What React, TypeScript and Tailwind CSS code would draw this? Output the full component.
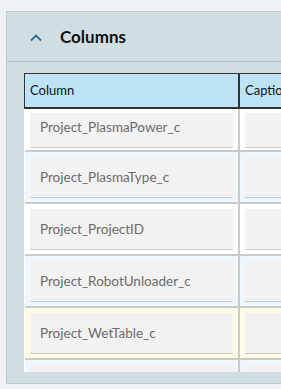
import React from "react";

const rows = [
  { name: "Project_PlasmaPower_c", bg: "bg-white", first: true },
  { name: "Project_PlasmaType_c", bg: "bg-[#eef7fd]" },
  { name: "Project_ProjectID", bg: "bg-white" },
  { name: "Project_RobotUnloader_c", bg: "bg-[#eef7fd]" },
  { name: "Project_WetTable_c", bg: "bg-[#fdfbe1]" },
  { name: "", bg: "bg-[#eef7fd]" },
];

const Cell = ({ text, first }: { text?: string; first?: boolean }) => {
  const box = (
    <div className="h-[41px] bg-[#f2f2f2] border-b border-[#cccccc] flex items-center pl-[10px] text-[13.5px] text-[#6b6b6b] whitespace-nowrap">
      {text}
    </div>
  );
  if (first) {
    return (
      <div className="h-[35px] overflow-hidden">
        <div className="-mt-[6px]">{box}</div>
      </div>
    );
  }
  return box;
};

export default function App() {
  return (
    <div
      className="w-[281px] h-[389px] overflow-hidden bg-[#eef2f5] pt-[11px] pl-[6px]"
      style={{ fontFamily: "Lato, 'Noto Sans', sans-serif" }}
    >
      <div className="w-[300px] border border-r-0 border-[#bccbd0] bg-[#d0dee2]">
        {/* Header */}
        <div className="h-[50px] border-b border-[#a8c2ca] flex items-center pl-[23px] gap-[18px]">
          <svg width="12" height="8" viewBox="0 0 12 8" className="mt-[2px]">
            <path d="M1 6.5 L6 1.5 L11 6.5" fill="none" stroke="#2b6d9f" strokeWidth="1.8" />
          </svg>
          <span className="text-[17px] font-bold text-[#111]">Columns</span>
        </div>

        {/* Body */}
        <div className="pt-[11px] pb-[11px] pl-[17px]">
          <div className="h-[299px] overflow-hidden">
            <div className="flex h-[36px] bg-[#bee2f6] border border-b-2 border-[#333] text-[13px] text-[#111]">
              <div className="w-[213px] flex items-center pl-[5px]">Column</div>
              <div className="w-[2px] bg-[#333]" />
              <div className="flex-1 flex items-center pl-[5px] whitespace-nowrap">Caption</div>
            </div>
            <div className="border-l border-white">
              {rows.map((r, i) => (
                <div key={i} className={`flex border-b-2 border-[#cacaca] ${r.bg}`}>
                  <div className={`w-[213px] px-[5px] ${r.first ? "pt-[4px] pb-[2px]" : "pt-[5px] pb-[4px]"}`}>
                    <Cell text={r.name} first={r.first} />
                  </div>
                  <div className="w-[2px] bg-[#cacaca]" />
                  <div className={`flex-1 px-[5px] ${r.first ? "pt-[4px] pb-[2px]" : "pt-[5px] pb-[4px]"}`}>
                    <Cell first={r.first} />
                  </div>
                </div>
              ))}
            </div>
          </div>
        </div>
      </div>
    </div>
  );
}
